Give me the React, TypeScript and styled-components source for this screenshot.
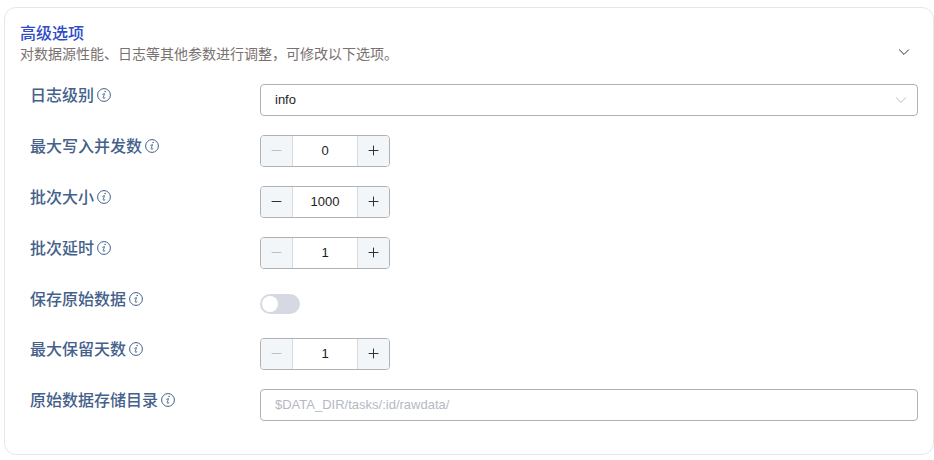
import React, { useId, useState } from "react";
import styled, { createGlobalStyle } from "styled-components";

const GlobalStyle = createGlobalStyle`
  *, *::before, *::after { box-sizing: border-box; }
  body {
    margin: 0;
    background: #fff;
    font-family: "Liberation Sans", "Noto Sans CJK SC", sans-serif;
    font-size: 13px;
    color: #1d1e20;
  }
  button, input, select { font: inherit; color: inherit; }
`;

const Card = styled.section`
  margin: 7px 0 0 4px;
  padding: 14px 15px 33px;
  border: 1px solid #e6e6e8;
  border-radius: 12px;
`;

const Header = styled.header`
  display: flex;
  align-items: flex-end;
  justify-content: space-between;
  margin-bottom: 22px;
`;

const Title = styled.h2`
  margin: 0;
  font-size: 16px;
  line-height: 24px;
  font-weight: 500;
  color: #2f4cc8;
`;

const Description = styled.p`
  margin: 0;
  font-size: 14px;
  line-height: 16px;
  color: #79716f;
`;

const CollapseButton = styled.button`
  display: flex;
  padding: 3px 7px;
  border: 0;
  background: none;
  color: #303133;
  cursor: pointer;
`;

const Form = styled.form`
  display: flex;
  flex-direction: column;
  gap: 19px;
`;

const Row = styled.div<{ $compact?: boolean }>`
  display: grid;
  grid-template-columns: 230px minmax(0, 1fr);
  padding-left: 10px;
  height: ${(p) => (p.$compact ? 31 : 32)}px;
`;

const LabelCell = styled.div`
  display: flex;
  align-items: flex-start;
  gap: 2px;
  color: #446189;
  > svg { margin-top: 3px; }
`;

const Label = styled.label`
  font-size: 16px;
  line-height: 24px;
  font-weight: 500;
  white-space: nowrap;
`;

const TextInput = styled.input`
  width: 100%;
  height: 32px;
  padding: 0 14px 2px;
  border: 1px solid #b1b1b3;
  border-radius: 4px;
  background: #fff;
  outline: none;
  &::placeholder { color: #b5b9c4; opacity: 1; }
  &:focus { border-color: #3653cb; }
`;

const SelectWrap = styled.div`
  display: grid;
  align-items: center;
  > * { grid-area: 1 / 1; }
  > svg {
    justify-self: end;
    margin-right: 10px;
    color: #b8bcc6;
    pointer-events: none;
  }
`;

const Select = styled.select`
  appearance: none;
  width: 100%;
  height: 32px;
  padding: 0 30px 2px 14px;
  border: 1px solid #b1b1b3;
  border-radius: 4px;
  background: #fff;
  outline: none;
`;

const Stepper = styled.div`
  display: flex;
  width: 130px;
  height: 32px;
  border: 1px solid #b1b1b3;
  border-radius: 4px;
  overflow: hidden;
`;

const StepButton = styled.button<{ $side: "left" | "right" }>`
  display: flex;
  flex: none;
  align-items: center;
  justify-content: center;
  width: 32px;
  padding: 0 0 1px;
  border: 0 solid #d5d9e0;
  border-${(p) => (p.$side === "left" ? "right" : "left")}-width: 1px;
  background: #f2f6f9;
  color: #303133;
  cursor: pointer;
  &:disabled { color: #bcc0c7; cursor: not-allowed; }
`;

const StepInput = styled.input`
  flex: 1;
  min-width: 0;
  padding: 0 0 2px;
  border: 0;
  background: #fff;
  text-align: center;
  outline: none;
  appearance: textfield;
  &::-webkit-inner-spin-button,
  &::-webkit-outer-spin-button { appearance: none; margin: 0; }
`;

const Switch = styled.input`
  appearance: none;
  display: flex;
  align-items: center;
  align-self: center;
  width: 40px;
  height: 20px;
  margin: 0;
  padding: 2px;
  border-radius: 10px;
  background: #d7d9e2;
  cursor: pointer;
  &::before {
    content: "";
    width: 16px;
    height: 16px;
    border-radius: 50%;
    background: #fff;
  }
  &:checked { background: #3653cb; justify-content: flex-end; }
`;

const InfoIcon = () => (
  <svg width="16" height="16" viewBox="0 0 16 16" fill="none" stroke="currentColor" aria-hidden="true">
    <circle cx="8" cy="8" r="6.4" />
    <path d="M6.7 7.3 8.5 6.6 7.2 10.7Q7 12 8.9 10.8" strokeWidth="0.9" strokeLinecap="round" strokeLinejoin="round" />
    <circle cx="9.1" cy="4.5" r="0.75" fill="currentColor" stroke="none" />
  </svg>
);

const ChevronIcon = () => (
  <svg width="14" height="14" viewBox="0 0 14 14" fill="none" stroke="currentColor" aria-hidden="true">
    <path d="M2.4 4.8 7 9.4l4.6-4.6" strokeLinecap="round" />
  </svg>
);

const StepIcon = ({ plus }: { plus?: boolean }) => (
  <svg width="11" height="11" viewBox="0 0 11 11" stroke="currentColor" aria-hidden="true">
    <path d={plus ? "M1 5.5h9M5.5 1v9" : "M1 5.5h9"} strokeLinecap="round" />
  </svg>
);

interface FieldProps {
  label: string;
  compact?: boolean;
  children: (id: string) => React.ReactNode;
}

const Field = ({ label, compact, children }: FieldProps) => {
  const id = useId();
  return (
    <Row $compact={compact}>
      <LabelCell>
        <Label htmlFor={id}>{label}</Label>
        <InfoIcon />
      </LabelCell>
      {children(id)}
    </Row>
  );
};

interface NumberFieldProps {
  label: string;
  initial: number;
  min: number;
}

const NumberField = ({ label, initial, min }: NumberFieldProps) => {
  const [value, setValue] = useState(initial);
  return (
    <Field label={label}>
      {(id) => (
        <Stepper>
          <StepButton type="button" $side="left" aria-label={`减少${label}`} disabled={value <= min} onClick={() => setValue(value - 1)}>
            <StepIcon />
          </StepButton>
          <StepInput id={id} type="number" min={min} value={value} onChange={(e) => setValue(Number(e.target.value))} />
          <StepButton type="button" $side="right" aria-label={`增加${label}`} onClick={() => setValue(value + 1)}>
            <StepIcon plus />
          </StepButton>
        </Stepper>
      )}
    </Field>
  );
};

export default function App() {
  const [open, setOpen] = useState(true);
  return (
    <>
      <GlobalStyle />
      <Card>
        <Header>
          <div>
            <Title>高级选项</Title>
            <Description>对数据源性能、日志等其他参数进行调整，可修改以下选项。</Description>
          </div>
          <CollapseButton type="button" aria-label="高级选项" aria-expanded={open} onClick={() => setOpen(!open)}>
            <ChevronIcon />
          </CollapseButton>
        </Header>
        {open && (
          <Form>
            <Field label="日志级别">
              {(id) => (
                <SelectWrap>
                  <Select id={id} defaultValue="info">
                    <option>error</option>
                    <option>warn</option>
                    <option>info</option>
                    <option>debug</option>
                    <option>trace</option>
                  </Select>
                  <ChevronIcon />
                </SelectWrap>
              )}
            </Field>
            <NumberField label="最大写入并发数" initial={0} min={0} />
            <NumberField label="批次大小" initial={1000} min={1} />
            <NumberField label="批次延时" initial={1} min={1} />
            <Field label="保存原始数据" compact>
              {(id) => <Switch id={id} type="checkbox" role="switch" />}
            </Field>
            <NumberField label="最大保留天数" initial={1} min={1} />
            <Field label="原始数据存储目录">
              {(id) => <TextInput id={id} type="text" placeholder="$DATA_DIR/tasks/:id/rawdata/" />}
            </Field>
          </Form>
        )}
      </Card>
    </>
  );
}
